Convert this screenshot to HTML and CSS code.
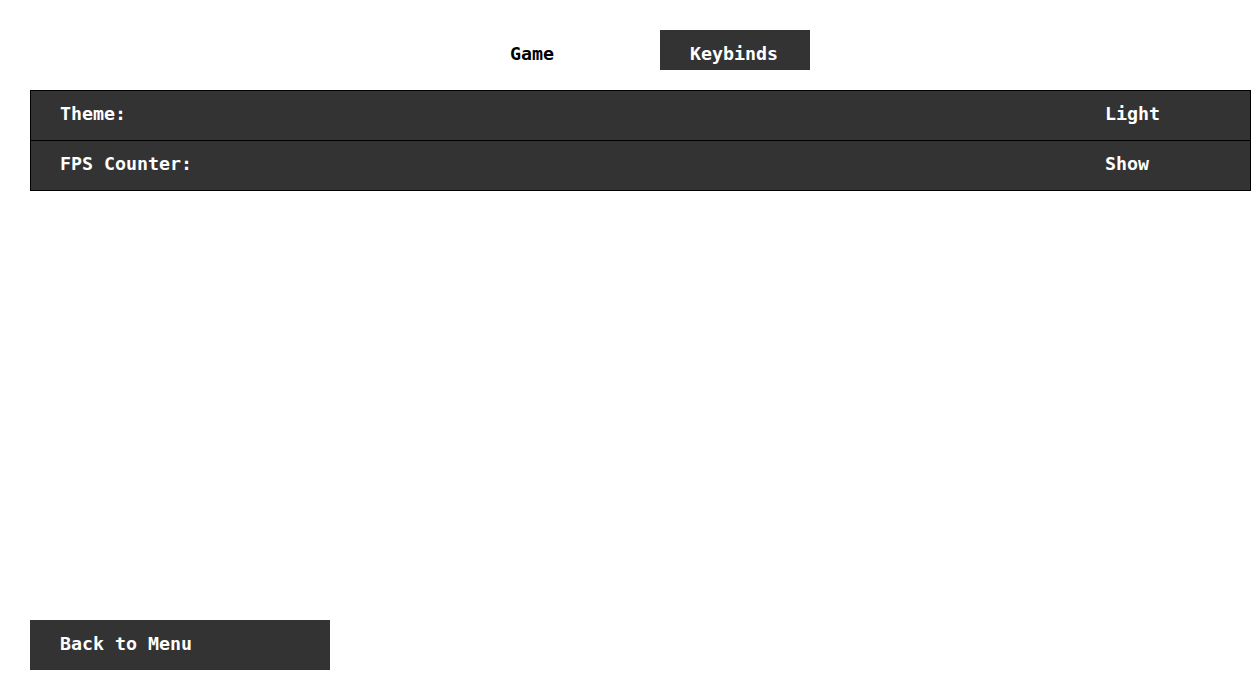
FILE: index.html
```html
<!DOCTYPE html>
<html>
<head>
<meta charset="utf-8">
<link rel="stylesheet" href="styles.css">
</head>
<body>
<div class="page">
  <div class="tabs">
    <div class="tab">Game</div>
    <div class="tab active">Keybinds</div>
  </div>
  <div class="settings">
    <div class="row">
      <div class="label">Theme:</div>
      <div class="value">Light</div>
    </div>
    <div class="row">
      <div class="label">FPS Counter:</div>
      <div class="value">Show</div>
    </div>
  </div>
  <div class="back">Back to Menu</div>
</div>
</body>
</html>
```
FILE: styles.css
```css
html, body {
  margin: 0;
  padding: 0;
  background: #ffffff;
}
body {
  font-family: "DejaVu Sans Mono", "Liberation Mono", monospace;
  font-weight: bold;
  font-size: 18.3px;
}
.page {
  height: 678px;
  box-sizing: border-box;
  padding: 30px 0 8px 30px;
  display: flex;
  flex-direction: column;
}
.tabs {
  display: flex;
  justify-content: center;
  gap: 30px;
}
.tab {
  width: 150px;
  height: 40px;
  box-sizing: border-box;
  padding: 6px 30px 0;
  display: flex;
  align-items: center;
  color: #000;
}
.tab.active {
  background: #333333;
  color: #ffffff;
}
.settings {
  margin-top: 20px;
  width: 1221px;
}
.row {
  display: flex;
  align-items: center;
  height: 49px;
  box-sizing: content-box;
  border: 1px solid #000;
  background: #333333;
  color: #ffffff;
}
.row + .row {
  border-top: none;
}
.label {
  flex: 1;
  padding-left: 29px;
  padding-bottom: 4px;
}
.value {
  width: 175px;
  padding-left: 30px;
  padding-bottom: 4px;
  box-sizing: border-box;
}
.back {
  margin-top: auto;
  width: 300px;
  height: 50px;
  box-sizing: border-box;
  padding: 0 0 4px 30px;
  display: flex;
  align-items: center;
  background: #333333;
  color: #ffffff;
}
```
